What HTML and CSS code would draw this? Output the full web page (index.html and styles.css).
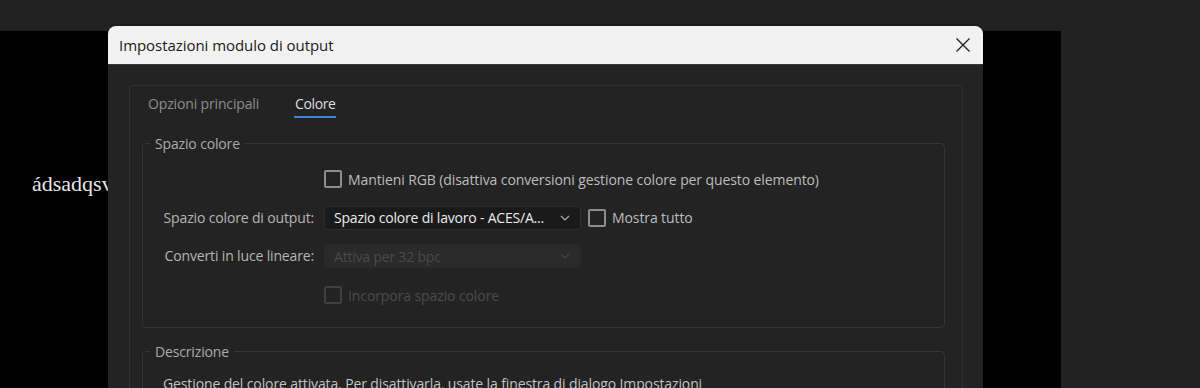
FILE: index.html
```html
<!DOCTYPE html>
<html lang="it">
<head>
<meta charset="utf-8">
<title>Impostazioni modulo di output</title>
<link rel="stylesheet" href="styles.css">
</head>
<body>
<div class="topbar"></div>
<div class="stage">
  <p class="stage-text">ádsadqsvxzzc</p>
</div>

<div class="dialog">
  <div class="titlebar">
    <span class="title">Impostazioni modulo di output</span>
    <svg class="close" width="16" height="16" viewBox="0 0 16 16"><path d="M1.5 1.5 L14.5 14.5 M14.5 1.5 L1.5 14.5" stroke="#1e1e1e" stroke-width="1.3" fill="none"/></svg>
  </div>
  <div class="body">
    <div class="panel">
      <div class="tabs">
        <span class="tab">Opzioni principali</span>
        <span class="tab active">Colore</span>
      </div>

      <fieldset class="group">
        <legend>Spazio colore</legend>
        <div class="rows">
          <div class="label"></div>
          <label class="check"><span class="box"></span>Mantieni RGB (disattiva conversioni gestione colore per questo elemento)</label>

          <div class="label">Spazio colore di output:</div>
          <div class="ctrl-line">
            <div class="select"><span>Spazio colore di lavoro - ACES/A...</span>
              <svg width="10" height="6" viewBox="0 0 10 6"><path d="M1 1 L5 5 L9 1" stroke="#b0b0b0" stroke-width="1.2" fill="none"/></svg>
            </div>
            <label class="check"><span class="box"></span>Mostra tutto</label>
          </div>

          <div class="label">Converti in luce lineare:</div>
          <div class="ctrl-line">
            <div class="select disabled"><span>Attiva per 32 bpc</span>
              <svg width="10" height="6" viewBox="0 0 10 6"><path d="M1 1 L5 5 L9 1" stroke="#454545" stroke-width="1.2" fill="none"/></svg>
            </div>
          </div>

          <div class="label"></div>
          <label class="check disabled"><span class="box"></span>Incorpora spazio colore</label>
        </div>
      </fieldset>

      <fieldset class="group desc">
        <legend>Descrizione</legend>
        <p class="desc-text">Gestione del colore attivata. Per disattivarla, usate la finestra di dialogo Impostazioni</p>
      </fieldset>
    </div>
  </div>
</div>
</body>
</html>
```

FILE: styles.css
```css
html, body {
  margin: 0;
  padding: 0;
}
body {
  width: 1200px;
  height: 388px;
  overflow: hidden;
  background: #222222;
  position: relative;
  font-family: "Open Sans", "Noto Sans", sans-serif;
}
.topbar {
  height: 31px;
  background: #212121;
}
.stage {
  width: 1061px;
  height: 357px;
  background: #000;
  overflow: hidden;
}
.stage-text {
  margin: 0;
  padding: 140px 0 0 32px;
  font-family: "Liberation Serif", serif;
  font-size: 22px;
  color: #e6e6e6;
}
.dialog {
  position: absolute;
  left: 108px;
  top: 26px;
  width: 875px;
  height: 362px;
  border-radius: 8px 8px 0 0;
  overflow: hidden;
  background: #232323;
  box-shadow: 0 0 2px rgba(0,0,0,0.6);
}
.titlebar {
  height: 38px;
  background: #f2f2f2;
  border-bottom: 1px solid #3a3a3a;
  display: flex;
  align-items: center;
  justify-content: space-between;
  padding: 0 12px 0 11px;
}
.title {
  font-family: "Open Sans", sans-serif;
  font-size: 15px;
  color: #1a1a1a;
  letter-spacing: -0.05px;
}
.close {
  display: block;
}
.body {
  padding: 20px 20px 0 21px;
}
.panel {
  border: 1px solid #2f2f2f;
  border-radius: 3px;
  height: 330px;
  padding: 0 17px 0 12px;
}
.tabs {
  display: flex;
  gap: 35px;
  padding: 8px 0 0 6px;
  height: 30px;
}
.tab {
  font-size: 14px;
  color: #8e8e8e;
  height: 22px;
  line-height: 20px;
  letter-spacing: -0.15px;
}
.tab.active {
  color: #dedede;
  border-bottom: 2px solid #3b88d8;
  padding: 0 1px;
  letter-spacing: -0.4px;
}
.group {
  margin: 10px 0 0 0;
  border: 1px solid #363636;
  border-radius: 4px;
  padding: 0 0 20px 0;
  min-width: 0;
}
.group legend {
  margin-left: 7px;
  padding: 0 5px;
  font-size: 14px;
  color: #ababab;
  letter-spacing: -0.15px;
}
.rows {
  display: grid;
  grid-template-columns: 171px 1fr;
  column-gap: 10px;
  row-gap: 14.7px;
  align-items: center;
  padding-top: 14px;
}
.rows > * {
  height: 24px;
}
.label {
  text-align: right;
  font-size: 14px;
  color: #b6b6b6;
  line-height: 24px;
  letter-spacing: -0.15px;
  white-space: nowrap;
}
.ctrl-line {
  display: flex;
  align-items: center;
  gap: 7px;
}
.check {
  display: flex;
  align-items: center;
  gap: 6px;
  font-size: 14px;
  color: #bdbdbd;
  letter-spacing: -0.1px;
  white-space: nowrap;
}
.box {
  width: 14px;
  height: 14px;
  border: 2px solid #8d8d8d;
  border-radius: 2px;
  flex: none;
}
.check.disabled {
  color: #4c4c4c;
}
.check.disabled .box {
  border-color: #404040;
}
.select {
  height: 22px;
  background: #1a1a1a;
  border: 1px solid #2e2e2e;
  border-radius: 3px;
  display: flex;
  align-items: center;
  justify-content: space-between;
  padding: 0 10px 0 9px;
  box-sizing: content-box;
  width: 236px;
  font-size: 14px;
  color: #ececec;
  letter-spacing: -0.2px;
}
.select.disabled {
  background: #2a2a2a;
  border-color: #2a2a2a;
  color: #4a4a4a;
}
.group.desc {
  margin-top: 14px;
  height: 80px;
}
.desc-text {
  margin: 13px 0 0 20px;
  font-size: 14px;
  color: #c2c2c2;
  letter-spacing: -0.12px;
}
```
